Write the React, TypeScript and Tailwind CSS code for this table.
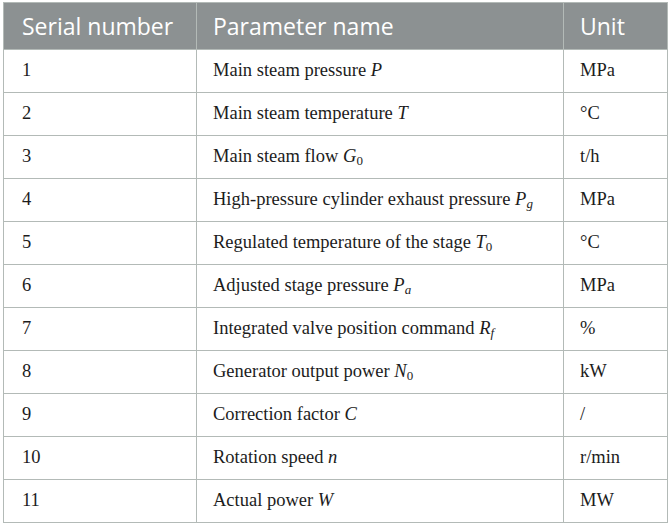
import React from "react";

const rows: { n: string; name: React.ReactNode; unit: string }[] = [
  { n: "1", name: <>Main steam pressure <i>P</i></>, unit: "MPa" },
  { n: "2", name: <>Main steam temperature <i>T</i></>, unit: "°C" },
  { n: "3", name: <>Main steam flow <i>G</i><sub className="text-[13px]">0</sub></>, unit: "t/h" },
  { n: "4", name: <>High-pressure cylinder exhaust pressure <i>P</i><sub className="text-[13px] italic">g</sub></>, unit: "MPa" },
  { n: "5", name: <>Regulated temperature of the stage <i>T</i><sub className="text-[13px]">0</sub></>, unit: "°C" },
  { n: "6", name: <>Adjusted stage pressure <i>P</i><sub className="text-[13px] italic">a</sub></>, unit: "MPa" },
  { n: "7", name: <>Integrated valve position command <i>R</i><sub className="text-[13px] italic">f</sub></>, unit: "%" },
  { n: "8", name: <>Generator output power <i>N</i><sub className="text-[13px]">0</sub></>, unit: "kW" },
  { n: "9", name: <>Correction factor <i>C</i></>, unit: "/" },
  { n: "10", name: <>Rotation speed <i>n</i></>, unit: "r/min" },
  { n: "11", name: <>Actual power <i>W</i></>, unit: "MW" },
];

export default function App() {
  return (
    <div className="min-h-screen bg-white pt-[2px] pl-[3px]">
      <table className="w-[664px] border-collapse border border-[#b3bab7] table-fixed">
        <colgroup>
          <col className="w-[193px]" />
          <col className="w-[367px]" />
          <col className="w-[104px]" />
        </colgroup>
        <thead>
          <tr className="h-[47px] bg-[#8c9192] text-white text-[23px] font-['Open_Sans',sans-serif]">
            <th className="border border-[#b3bab7] px-[18px] text-left font-normal">Serial number</th>
            <th className="border border-[#b3bab7] px-[16px] text-left font-normal">Parameter name</th>
            <th className="border border-[#b3bab7] px-[16px] text-left font-normal">Unit</th>
          </tr>
        </thead>
        <tbody className="text-[18.5px] text-[#1c1c1c] font-['Liberation_Serif',serif]">
          {rows.map((r) => (
            <tr key={r.n} className="h-[43px]">
              <td className="border border-[#b3bab7] px-[18px]">{r.n}</td>
              <td className="border border-[#b3bab7] px-[16px]">{r.name}</td>
              <td className="border border-[#b3bab7] px-[16px]">{r.unit}</td>
            </tr>
          ))}
        </tbody>
      </table>
    </div>
  );
}
